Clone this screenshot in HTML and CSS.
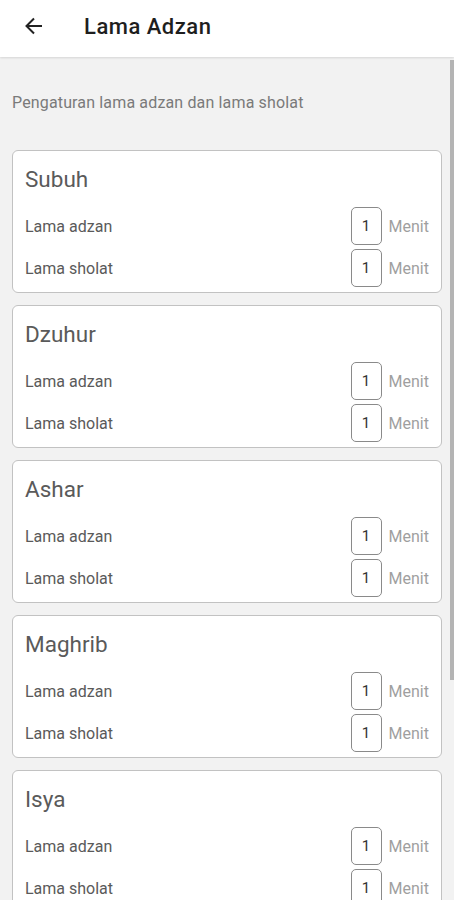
FILE: index.html
```html
<!DOCTYPE html>
<html lang="id">
<head>
<meta charset="utf-8">
<title>Lama Adzan</title>
<link rel="stylesheet" href="styles.css">
</head>
<body>
<header class="appbar">
  <svg class="back" width="20" height="20" viewBox="0 0 20 20" aria-hidden="true">
    <path d="M18 10H3M10 2.5L2.5 10L10 17.5" fill="none" stroke="#222" stroke-width="2" stroke-linecap="butt"/>
  </svg>
  <h1 class="title">Lama Adzan</h1>
</header>
<main class="content">
  <p class="subtitle">Pengaturan lama adzan dan lama sholat</p>
  <div class="cards">
    <section class="card">
      <h2 class="card-title">Subuh</h2>
      <div class="row"><span class="label">Lama adzan</span><span class="box">1</span><span class="unit">Menit</span></div>
      <div class="row"><span class="label">Lama sholat</span><span class="box">1</span><span class="unit">Menit</span></div>
    </section>
    <section class="card">
      <h2 class="card-title">Dzuhur</h2>
      <div class="row"><span class="label">Lama adzan</span><span class="box">1</span><span class="unit">Menit</span></div>
      <div class="row"><span class="label">Lama sholat</span><span class="box">1</span><span class="unit">Menit</span></div>
    </section>
    <section class="card">
      <h2 class="card-title">Ashar</h2>
      <div class="row"><span class="label">Lama adzan</span><span class="box">1</span><span class="unit">Menit</span></div>
      <div class="row"><span class="label">Lama sholat</span><span class="box">1</span><span class="unit">Menit</span></div>
    </section>
    <section class="card">
      <h2 class="card-title">Maghrib</h2>
      <div class="row"><span class="label">Lama adzan</span><span class="box">1</span><span class="unit">Menit</span></div>
      <div class="row"><span class="label">Lama sholat</span><span class="box">1</span><span class="unit">Menit</span></div>
    </section>
    <section class="card">
      <h2 class="card-title">Isya</h2>
      <div class="row"><span class="label">Lama adzan</span><span class="box">1</span><span class="unit">Menit</span></div>
      <div class="row"><span class="label">Lama sholat</span><span class="box">1</span><span class="unit">Menit</span></div>
    </section>
  </div>
</main>
<div class="scrollbar"></div>
</body>
</html>
```
FILE: styles.css
```css
html, body {
  margin: 0;
  padding: 0;
}
body {
  width: 454px;
  height: 900px;
  overflow: hidden;
  background: #f2f2f2;
  font-family: Roboto, "Noto Sans", sans-serif;
  position: relative;
}
.appbar {
  height: 57px;
  box-sizing: border-box;
  padding-bottom: 5px;
  background: #ffffff;
  display: flex;
  align-items: center;
  box-shadow: 0 1px 2px rgba(0,0,0,0.12);
  position: relative;
  z-index: 1;
}
.back {
  margin-left: 24px;
  width: 20px;
  height: 20px;
  flex: none;
}
.title {
  margin: 0 0 0 40px;
  font-size: 22px;
  font-weight: 500;
  color: #1e1e1e;
  letter-spacing: 0.5px;
}
.content {
  padding: 35px 12px 0 12px;
}
.subtitle {
  margin: 0 0 36px 0;
  font-size: 16px;
  line-height: 22px;
  color: #7a7a7a;
  letter-spacing: 0.15px;
}
.cards {
  display: flex;
  flex-direction: column;
  gap: 12px;
}
.card {
  background: #ffffff;
  border: 1px solid #c2c2c2;
  border-radius: 6px;
  padding: 16px 12px 5px 12px;
  display: flex;
  flex-direction: column;
  gap: 4px;
}
.card-title {
  margin: 0 0 12px 0;
  font-size: 22.5px;
  line-height: 24px;
  font-weight: 400;
  color: #5a5a5a;
}
.row {
  display: flex;
  align-items: center;
  height: 38px;
}
.label {
  flex: 1;
  font-size: 16px;
  color: #5a5a5a;
  padding-top: 1px;
}
.box {
  width: 29px;
  height: 36px;
  border: 1px solid #8a8a8a;
  border-radius: 5px;
  display: flex;
  align-items: center;
  justify-content: center;
  font-size: 15px;
  color: #333333;
}
.unit {
  margin-left: 7px;
  font-size: 16px;
  color: #9f9f9f;
  padding-top: 1px;
}
.scrollbar {
  position: absolute;
  right: 0;
  top: 60px;
  width: 4px;
  height: 620px;
  background: #b4b4b4;
}
```
